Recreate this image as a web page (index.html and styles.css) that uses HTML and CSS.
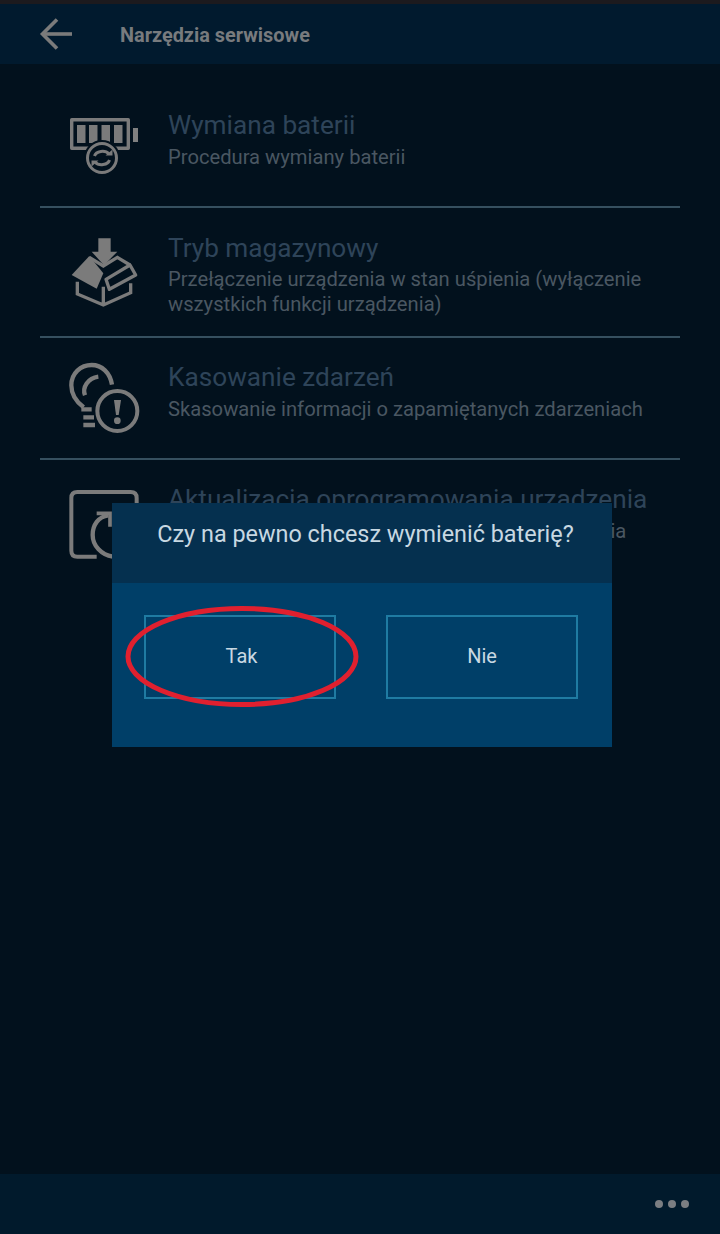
FILE: index.html
```html
<!DOCTYPE html>
<html lang="pl">
	<head>
		<meta charset="UTF-8" />
		<meta name="viewport" content="width=device-width, initial-scale=1.0" />
		<title>Narzędzia serwisowe</title>
		<link rel="stylesheet" href="styles.css">
	</head>
	<body>
		<div class="screen">
			<div class="status"></div>
			<header class="header">
				<svg class="back" width="36" height="34" viewBox="0 0 36 34" fill="none" stroke="currentColor" stroke-width="3.6">
					<path d="M33 17H4" />
					<path d="M18 2.5 3.5 17 18 31.5" />
				</svg>
				<h1 class="header-title">Narzędzia serwisowe</h1>
			</header>
			<main class="list">
				<div class="row row-1">
					<div class="row-icon">
						<svg width="77" height="77" viewBox="67 108 77 77" fill="none">
							<path d="M71.700 119.700H128.300V148.300H71.700Z" stroke="#7b7b7b" stroke-width="3.400" stroke-linejoin="round" />
							<path d="M77 125H85.500V143H77ZM89 125H97.500V143H89ZM101.500 125H110V143H101.500ZM114 125H122.500V143H114Z" fill="#7b7b7b" />
							<path d="M133 128H138V142H133Z" fill="#808080" />
							<circle cx="102" cy="158" r="18" fill="#02111d" />
							<circle cx="102" cy="158" r="14.500" stroke="#7b7b7b" stroke-width="3" />
							<path d="M94.500 156C96 151 105 149.500 109 154M109.500 160C108 165 99 166.500 95 162" stroke="#7b7b7b" stroke-width="3" />
							<path d="M105.500 155.500H112.500V149.500ZM98.500 160.500H91.500V166.500Z" fill="#7b7b7b" />
						</svg>
					</div>
					<div class="row-text">
						<div class="row-title">Wymiana baterii</div>
						<div class="row-sub">Procedura wymiany baterii</div>
					</div>
				</div>
				<div class="row row-2">
					<div class="row-icon">
						<svg width="77" height="77" viewBox="81 45 231 231" fill="none">
							<path d="M175 55H212V95H232L192 136 155 95H175Z" fill="#7b7b7b" />
							<path d="M148 112 190 138 232 112 270 135" stroke="#7b7b7b" stroke-width="10" />
							<path d="M148 108 95 165 170 206 190 160Z" fill="#7b7b7b" />
							<path d="M198 178 270 135 287 165 208 208Z" stroke="#7b7b7b" stroke-width="10" stroke-linejoin="round" />
							<path d="M112 185V222L190 255 272 218V190M190 200V255" stroke="#7b7b7b" stroke-width="10" />
						</svg>
					</div>
					<div class="row-text">
						<div class="row-title">Tryb magazynowy</div>
						<div class="row-sub">Przełączenie urządzenia w stan uśpienia (wyłączenie wszystkich funkcji urządzenia)</div>
					</div>
				</div>
				<div class="row row-3">
					<div class="row-icon">
						<svg width="77" height="77" viewBox="81 30 231 231" fill="none" stroke="#7b7b7b">
							<path d="M131 172C108 155 94 135 94 106 94 70 122 45 155 45 186 45 210 68 216 104" stroke-width="13" />
							<path d="M135 136C126 112 144 84 175 80" stroke-width="13" />
							<path d="M124 178H155M130 202H162M130 225H165" stroke-width="13" />
							<circle cx="232" cy="183" r="60" stroke-width="12" />
							<path d="M222 150H243L236 195H228Z" fill="#7b7b7b" stroke="none" />
							<circle cx="232" cy="212" r="10" fill="#7b7b7b" stroke="none" />
						</svg>
					</div>
					<div class="row-text">
						<div class="row-title">Kasowanie zdarzeń</div>
						<div class="row-sub">Skasowanie informacji o zapamiętanych zdarzeniach</div>
					</div>
				</div>
				<div class="row row-4">
					<div class="row-icon">
						<svg width="77" height="77" viewBox="81 51 231 231" fill="none" stroke="#7b7b7b">
							<path d="M170 260H112Q94 260 94 242V84Q94 66 112 66H272Q290 66 290 84V110" stroke-width="12" />
							<path d="M205 136C175 140 158 165 158 195 158 228 185 255 218 260" stroke-width="13" />
							<path d="M170 130H210V170" stroke-width="11" />
						</svg>
					</div>
					<div class="row-text">
						<div class="row-title">Aktualizacja oprogramowania urządzenia</div>
						<div class="row-sub">Procedura aktualizacji oprogramowania urządzenia</div>
					</div>
				</div>
			</main>
			<footer class="footer">
				<span class="dot"></span>
				<span class="dot"></span>
				<span class="dot"></span>
			</footer>

			<div class="dialog">
				<div class="dialog-head">Czy na pewno chcesz wymienić baterię?</div>
				<div class="dialog-body">
					<button class="dialog-btn dialog-btn-yes">Tak</button>
					<button class="dialog-btn">Nie</button>
				</div>
			</div>

			<svg class="mark" width="236" height="104" viewBox="0 0 236 104" fill="none">
				<ellipse cx="117" cy="50.500" rx="114" ry="48" stroke="#e0202f" stroke-width="5" />
			</svg>
		</div>
	</body>
</html>
```

FILE: styles.css
```css
*,
*::before,
*::after {
	box-sizing: border-box;
}
body {
	margin: 0;
	background-color: #02111d;
	font-family: Roboto, sans-serif;
	overflow: hidden;
}
.screen {
	position: relative;
	width: 720px;
	height: 1234px;
	display: flex;
	flex-direction: column;
}
.status {
	height: 4px;
	background-color: #1c1a1e;
}
.header {
	height: 60px;
	background-color: #011a2e;
	color: #7b7b7b;
	display: flex;
	align-items: center;
	padding-left: 39px;
}
.back {
	margin-top: -1px;
}
.header-title {
	margin: 2px 0 0 45px;
	font-size: 19.9px;
	font-weight: 700;
	color: #787b7e;
}
.list {
	flex-grow: 1;
	padding: 0 40px;
}
.row {
	display: flex;
	border-bottom: 2px solid #36505f;
}
.row-1 {
	height: 144px;
	padding-top: 44px;
}
.row-2 {
	height: 130px;
	padding-top: 25px;
}
.row-3 {
	height: 122px;
	padding-top: 22px;
}
.row-4 {
	border-bottom: 0;
	padding-top: 24px;
}
.row-icon {
	width: 128px;
	flex-shrink: 0;
	padding-left: 27px;
}
.row-icon svg {
	display: block;
}
.row-2 .row-icon {
	padding-top: 2px;
}
.row-4 .row-icon {
	padding-top: 3px;
}
.row-1 .row-text {
	padding-top: 2px;
}
.row-3 .row-text {
	padding-top: 2px;
}
.row-title {
	font-size: 26.2px;
	line-height: 30px;
	color: #2e4459;
}
.row-sub {
	font-size: 20.2px;
	line-height: 25px;
	color: #4a5762;
	margin-top: 5px;
}
.row-2 .row-sub {
	margin-top: 4px;
}
.footer {
	height: 60px;
	background-color: #011a2c;
	display: flex;
	justify-content: flex-end;
	align-items: center;
	gap: 5px;
	padding-right: 31px;
}
.dot {
	width: 8px;
	height: 8px;
	border-radius: 50%;
	background-color: #7b7e82;
}
.dialog {
	position: absolute;
	left: 112px;
	top: 503px;
	width: 500px;
	height: 244px;
	display: flex;
	flex-direction: column;
}
.dialog-head {
	height: 80px;
	background-color: #05304f;
	color: #c8d8e2;
	font-size: 23.4px;
	line-height: 62px;
	text-align: center;
	padding-left: 7px;
}
.dialog-body {
	flex-grow: 1;
	background-color: #003f68;
	display: flex;
	gap: 50px;
	padding: 32px 34px 0 32px;
}
.dialog-btn {
	width: 192px;
	height: 84px;
	background: transparent;
	border: 2px solid #1f7ba2;
	color: #c8d8e2;
	font-family: inherit;
	font-size: 20px;
	padding: 0 0 2px;
}
.dialog-btn-yes {
	padding-left: 3px;
}
.mark {
	position: absolute;
	left: 125px;
	top: 606px;
}
```
